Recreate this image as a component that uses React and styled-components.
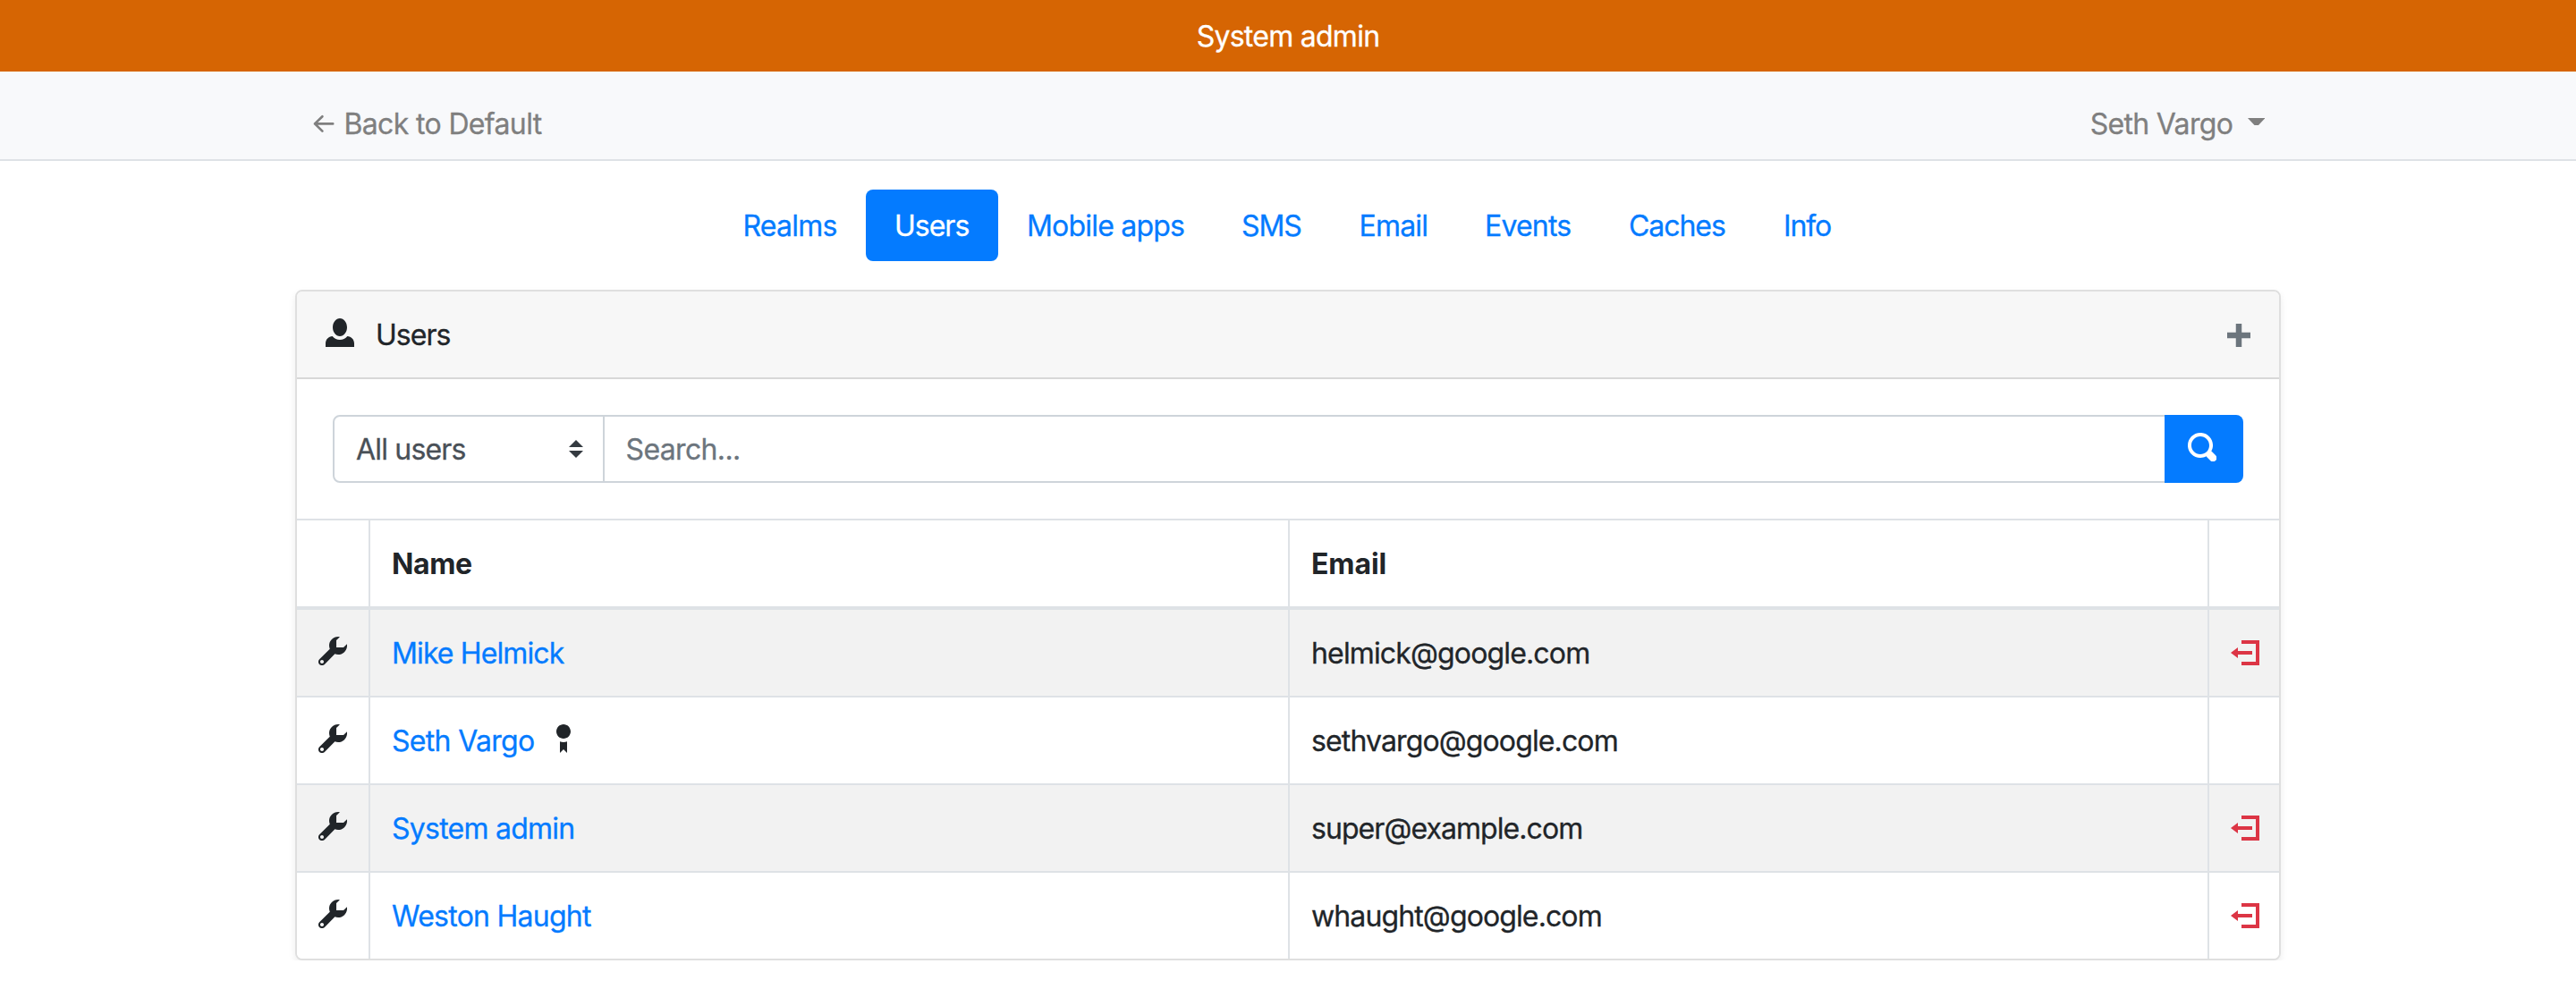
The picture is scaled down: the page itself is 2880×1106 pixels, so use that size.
import React from "react";
import styled, { createGlobalStyle } from "styled-components";

const GlobalStyle = createGlobalStyle`
  *, *::before, *::after { box-sizing: border-box; }
  body {
    margin: 0;
    background: #fff;
    color: #212529;
    font-family: Inter, "Liberation Sans", sans-serif;
    font-size: 32px;
    line-height: 48px;
  }
`;

const Text = styled.span`
  display: inline-block;
  padding-top: 2px;
  vertical-align: top;
  letter-spacing: ${(p) => p.$ls}px;
  white-space: nowrap;
  -webkit-text-stroke: ${(p) => (p.$bold ? 0 : 0.3)}px currentColor;
`;

const Banner = styled.div`
  display: flex;
  align-items: center;
  justify-content: center;
  height: 80px;
  background: #d66503;
  color: #fff;
`;

const Navbar = styled.nav`
  height: 100px;
  padding-top: 18px;
  background: #f8f9fb;
  border-bottom: 2px solid #dee2e6;
`;

const Container = styled.div`
  width: 2220px;
  margin: 0 auto;
`;

const NavRow = styled(Container)`
  display: flex;
  align-items: center;
  justify-content: space-between;
  height: 80px;
  padding: 0 18px 0 20px;
  color: #7f7f7f;
`;

const NavLink = styled.a`
  display: flex;
  align-items: center;
  gap: ${(p) => p.$gap}px;
`;

const Caret = styled.svg`
  display: block;
  margin-top: -4px;
`;

const Tabs = styled.ul`
  display: flex;
  justify-content: center;
  margin: 32px 0;
  padding: 0;
  list-style: none;
`;

const Tab = styled.li`
  width: ${(p) => p.$width}px;
  height: 80px;
  padding: 15px 0 15px 32px;
  border-radius: 8px;
  color: ${(p) => (p.$active ? "#fff" : "#047bff")};
  background: ${(p) => (p.$active ? "#047bff" : "transparent")};
`;

const Card = styled(Container)`
  border: 2px solid #dfdfdf;
  border-radius: 8px;
  background: #fff;
  box-shadow: 0 4px 8px rgba(0, 0, 0, 0.075);
  overflow: hidden;
`;

const CardHeader = styled.header`
  display: flex;
  align-items: center;
  justify-content: space-between;
  height: 98px;
  padding: 0 32px;
  background: #f7f7f7;
  border-bottom: 2px solid #d8d8d8;
`;

const CardTitle = styled.div`
  display: flex;
  align-items: center;
  gap: 24px;
`;

const Icon = styled.svg`
  display: block;
  flex: none;
  width: ${(p) => p.$size || 32}px;
  height: ${(p) => p.$size || 32}px;
  margin-top: ${(p) => p.$top || 0}px;
  fill: ${(p) => p.$color || "#212529"};
`;

const SearchBar = styled.form`
  display: flex;
  height: 156px;
  padding: 40px;
`;

const Select = styled.div`
  display: flex;
  align-items: center;
  justify-content: space-between;
  width: 304px;
  height: 76px;
  padding: 0 22px 0 24px;
  border: 2px solid #ced4da;
  border-radius: 8px 0 0 8px;
  color: #495057;
`;

const Input = styled.input`
  flex: 1;
  height: 76px;
  min-width: 0;
  padding: 0 23.5px;
  border: 2px solid #ced4da;
  border-width: 2px 0;
  border-radius: 0;
  outline: none;
  background: #fff;
  font: inherit;
  letter-spacing: -0.64px;
  -webkit-text-stroke: 0.3px currentColor;
  &::placeholder { color: #6c757d; opacity: 1; }
`;

const SearchButton = styled.button`
  display: flex;
  align-items: center;
  width: 88px;
  height: 76px;
  padding: 0 0 0 26px;
  border: 0;
  border-radius: 0 8px 8px 0;
  background: #047bff;
`;

const Table = styled.table`
  width: 100%;
  table-layout: fixed;
  border-collapse: separate;
  border-spacing: 0;
`;

const HeadCell = styled.th`
  width: ${(p) => p.$width};
  height: 102px;
  padding: 0 24px;
  border-top: 2px solid #dee2e6;
  border-bottom: 4px solid #dee2e6;
  text-align: left;
  font-weight: 700;
  & + & { border-left: 2px solid #dee2e6; }
`;

const Row = styled.tr`
  background: ${(p) => (p.$striped ? "#f2f2f2" : "#fff")};
`;

const Cell = styled.td`
  height: ${(p) => (p.$first ? 96 : 98)}px;
  padding: 0 0 0 24px;
  border-top: ${(p) => (p.$first ? "0" : "2px solid #dee2e6")};
  & + & { border-left: 2px solid #dee2e6; }
`;

const NameLine = styled.div`
  display: flex;
  align-items: center;
  gap: 16px;
  color: #047bff;
`;

const ICONS = {
  person:
    "M4 0c-1.1 0-2 1.12-2 2.5s.9 2.5 2 2.5 2-1.12 2-2.5-.9-2.5-2-2.5zm-2.09 5c-1.06.05-1.91.92-1.91 2v1h8v-1c0-1.08-.84-1.95-1.91-2-.54.61-1.28 1-2.09 1-.81 0-1.55-.39-2.09-1z",
  plus: "M3 0v3h-3v2h3v3h2v-3h3v-2h-3v-3h-2z",
  search:
    "M3.5 0c-1.93 0-3.5 1.57-3.5 3.5s1.57 3.5 3.5 3.5c.59 0 1.17-.14 1.66-.41a1 1 0 0 0 .13.13l1 1a1.02 1.02 0 1 0 1.44-1.44l-1-1a1 1 0 0 0-.16-.13c.27-.49.44-1.06.44-1.66 0-1.93-1.55-3.5-3.5-3.5zm0 1c1.39 0 2.5 1.11 2.5 2.5 0 .66-.24 1.27-.66 1.72-.01.01-.02.02-.03.03a1 1 0 0 0-.13.13c-.44.4-1.04.63-1.69.63-1.39 0-2.5-1.11-2.5-2.5s1.11-2.5 2.5-2.5z",
  wrench:
    "M5.5 0c-1.38 0-2.5 1.12-2.5 2.5 0 .32.08.62.19.91l-2.91 2.88c-.39.39-.39 1.05 0 1.44.2.2.46.28.72.28.26 0 .52-.09.72-.28l2.88-2.91c.28.11.58.19.91.19 1.38 0 2.5-1.12 2.5-2.5 0-.16 0-.32-.03-.47l-.97.97h-2v-2l.97-.97c-.15-.03-.31-.03-.47-.03zm-4.5 6.5c.28 0 .5.22.5.5s-.22.5-.5.5-.5-.22-.5-.5.22-.5.5-.5z",
  badge:
    "M4 0c-1.1 0-2 .9-2 2s.9 2 2 2 2-.9 2-2-.9-2-2-2zm-1 4.81v3.19l1-1 1 1v-3.19c-.31.11-.65.19-1 .19s-.69-.08-1-.19z",
  leave: "M3 0v1h4v5h-4v1h5v-7h-5zm-1 2l-2 1.5 2 1.5v-1h4v-1h-4v-1z",
};

function Glyph({ name, size, top, color }) {
  return (
    <Icon viewBox="0 0 8 8" $size={size} $top={top} $color={color} aria-hidden="true">
      <path d={ICONS[name]} />
    </Icon>
  );
}

const tabs = [
  { label: "Realms", width: 169.5, ls: -0.76 },
  { label: "Users", width: 148, ls: -1, active: true },
  { label: "Mobile apps", width: 240, ls: -0.8 },
  { label: "SMS", width: 131.5, ls: -1.1 },
  { label: "Email", width: 140.5, ls: -0.8 },
  { label: "Events", width: 161, ls: -0.8 },
  { label: "Caches", width: 173, ls: -1.05 },
  { label: "Info", width: 119.5, ls: -1.1 },
];

const users = [
  { name: "Mike Helmick", ls: -0.88, email: "helmick@google.com", els: -0.85, removable: true },
  { name: "Seth Vargo", ls: -0.68, email: "sethvargo@google.com", els: -0.87, admin: true },
  { name: "System admin", ls: -0.76, email: "super@example.com", els: -0.93, removable: true },
  { name: "Weston Haught", ls: -0.74, email: "whaught@google.com", els: -0.88, removable: true },
];

export default function App() {
  return (
    <>
      <GlobalStyle />
      <Banner>
        <Text $ls={-0.74}>System admin</Text>
      </Banner>
      <Navbar>
        <NavRow>
          <NavLink $gap={10.5}>
            <svg width="24" height="22" viewBox="0 0 24 22" fill="none" stroke="#7f7f7f" strokeWidth="2.7" strokeLinecap="round" strokeLinejoin="round">
              <path d="M22.2 11.4H2M10.4 3.2L2 11.4L10.4 19.6" />
            </svg>
            <Text $ls={-0.65}>Back to Default</Text>
          </NavLink>
          <NavLink $gap={16.3}>
            <Text $ls={-0.68}>Seth Vargo</Text>
            <Caret width="19.5" height="8" viewBox="0 0 19.5 8" fill="#7f7f7f">
              <path d="M0 0H19.5L12 8H7.5Z" />
            </Caret>
          </NavLink>
        </NavRow>
      </Navbar>
      <Tabs>
        {tabs.map((t) => (
          <Tab key={t.label} $width={t.width} $active={t.active}>
            <Text $ls={t.ls}>{t.label}</Text>
          </Tab>
        ))}
      </Tabs>
      <Card>
        <CardHeader>
          <CardTitle>
            <Glyph name="person" top={-4} />
            <Text $ls={-0.95}>Users</Text>
          </CardTitle>
          <Glyph name="plus" size={26} top={2} color="#6c757d" />
        </CardHeader>
        <SearchBar>
          <Select>
            <Text $ls={-0.82}>All users</Text>
            <svg width="16" height="20" viewBox="0 0 16 20" fill="#343a40">
              <path d="M0 8L8 0L16 8ZM0 12H16L8 20Z" />
            </svg>
          </Select>
          <Input placeholder="Search..." />
          <SearchButton type="button" aria-label="Search">
            <Glyph name="search" top={-4} color="#fff" />
          </SearchButton>
        </SearchBar>
        <Table>
          <thead>
            <tr>
              <HeadCell $width="80px" />
              <HeadCell $width="1028px">
                <Text $bold $ls={-0.4}>Name</Text>
              </HeadCell>
              <HeadCell $width="1028px">
                <Text $bold $ls={-0.1}>Email</Text>
              </HeadCell>
              <HeadCell $width="80px" />
            </tr>
          </thead>
          <tbody>
            {users.map((u, i) => (
              <Row key={u.email} $striped={i % 2 === 0}>
                <Cell $first={i === 0}>
                  <Glyph name="wrench" top={-4} />
                </Cell>
                <Cell $first={i === 0}>
                  <NameLine>
                    <Text $ls={u.ls}>{u.name}</Text>
                    {u.admin && <Glyph name="badge" top={-4} />}
                  </NameLine>
                </Cell>
                <Cell $first={i === 0}>
                  <Text $ls={u.els}>{u.email}</Text>
                </Cell>
                <Cell $first={i === 0}>
                  {u.removable && <Glyph name="leave" top={4} color="#dc3545" />}
                </Cell>
              </Row>
            ))}
          </tbody>
        </Table>
      </Card>
    </>
  );
}
